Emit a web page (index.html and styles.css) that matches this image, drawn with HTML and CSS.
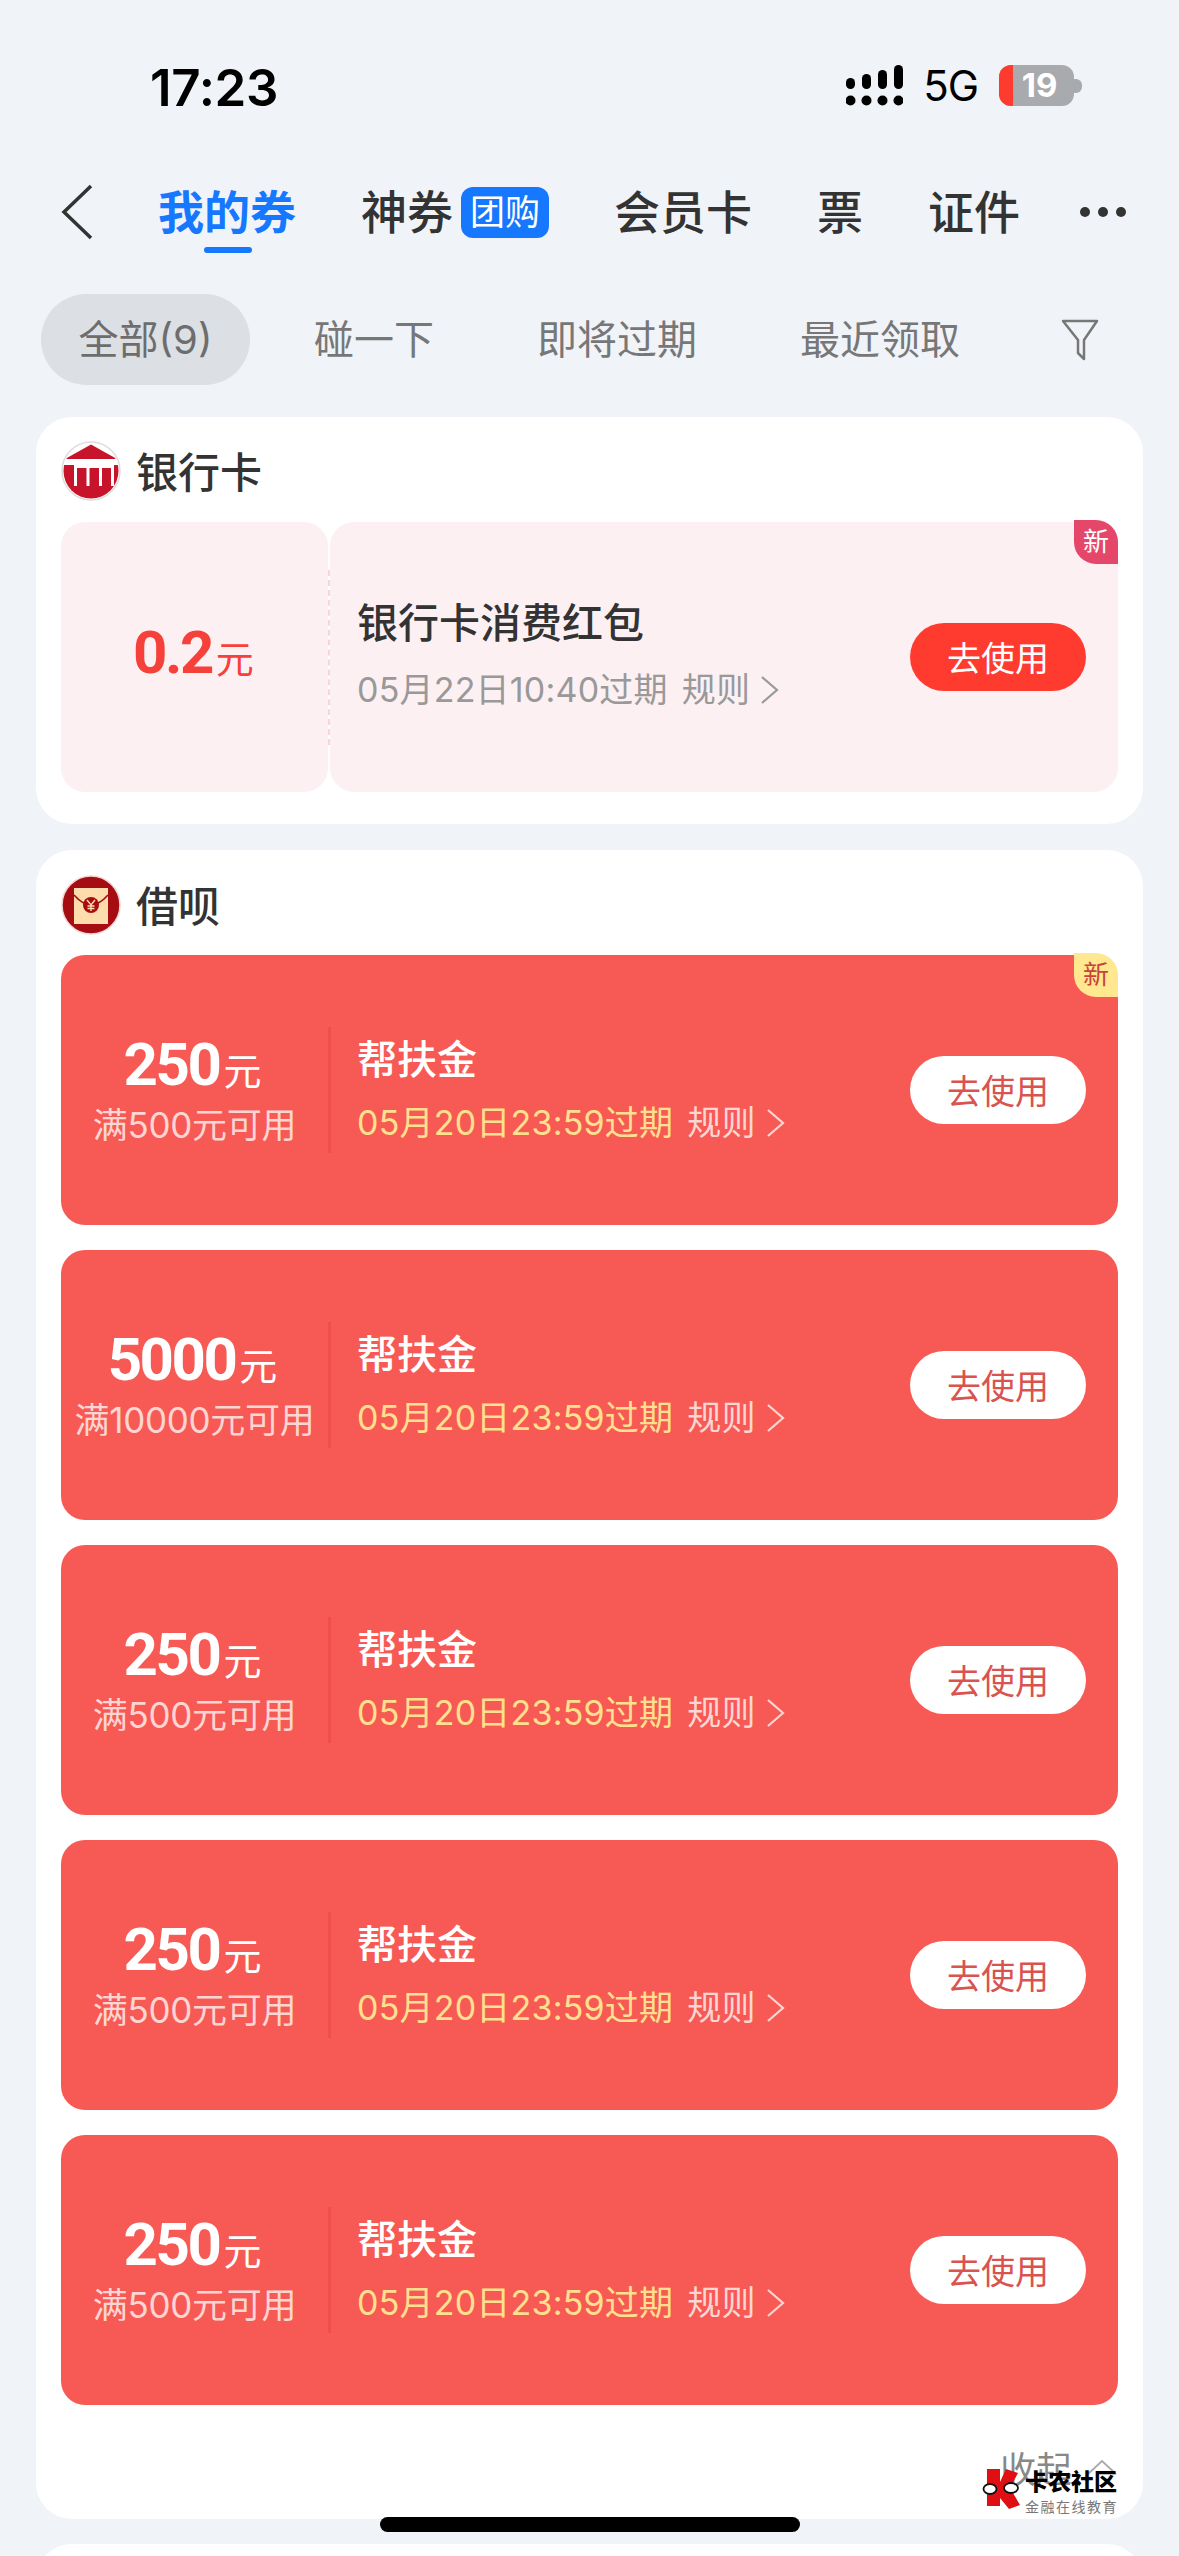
FILE: index.html
```html
<!DOCTYPE html>
<html lang="zh-CN">
<head>
  <meta charset="UTF-8" />
  <meta name="viewport" content="width=device-width, initial-scale=1.0" />
  <title>我的券</title>
  <link rel="stylesheet" href="styles.css">
</head>

<body>
<main class="page">
  <!-- Status bar -->
  <header class="status-bar">
    <span class="time">17:23</span>
    <div class="status-right">
      <svg class="signal" width="57" height="41" viewBox="0 0 57 41">
        <rect x="0" y="13" width="9" height="11" rx="4.5"/>
        <rect x="16" y="9" width="9" height="15" rx="4.5"/>
        <rect x="32" y="5" width="9" height="19" rx="4.5"/>
        <rect x="48" y="0" width="9" height="24" rx="4.5"/>
        <circle cx="4.5" cy="35.5" r="5"/>
        <circle cx="20.5" cy="35.5" r="5"/>
        <circle cx="36.5" cy="35.5" r="5"/>
        <circle cx="52.5" cy="35.5" r="5"/>
      </svg>
      <span class="network">5G</span>
      <div class="battery">
        <div class="battery-low"></div>
        <span class="battery-num">19</span>
      </div>
      <div class="battery-nub"></div>
    </div>
  </header>

  <!-- Top tabs -->
  <nav class="tabs">
    <svg class="back" width="32" height="56" viewBox="0 0 32 56">
      <path d="M30 2 L3 28 L30 54" fill="none" stroke="#333" stroke-width="3.5"/>
    </svg>
    <a class="tab tab-active">我的券</a>
    <a class="tab">神券<span class="tab-badge">团购</span></a>
    <a class="tab">会员卡</a>
    <a class="tab">票</a>
    <a class="tab">证件</a>
    <div class="more"><i></i><i></i><i></i></div>
  </nav>

  <!-- Filter row -->
  <div class="filters">
    <a class="filter filter-active">全部(9)</a>
    <a class="filter">碰一下</a>
    <a class="filter">即将过期</a>
    <a class="filter">最近领取</a>
    <svg class="filter-icon" width="38" height="42" viewBox="0 0 38 42">
      <path d="M2 2 H36 L23 21 V40 L17 34 V21 Z" fill="none" stroke="#777" stroke-width="2.5" stroke-linejoin="round"/>
    </svg>
  </div>

  <!-- Bank card section -->
  <section class="group">
    <div class="group-head">
      <svg class="group-icon" width="60" height="60" viewBox="0 0 60 60">
        <defs>
          <clipPath id="bank-clip"><circle cx="30" cy="30" r="27.5"/></clipPath>
        </defs>
        <circle cx="30" cy="30" r="29" fill="#fff" stroke="#ddd" stroke-width="1.5"/>
        <g clip-path="url(#bank-clip)" fill="#c8142a">
          <path d="M30 3.5 L56 18 H4 Z"/>
          <rect x="0" y="24" width="60" height="36"/>
          <rect x="13" y="24" width="3" height="21" fill="#fff"/>
          <rect x="25.5" y="24" width="3" height="21" fill="#fff"/>
          <rect x="38" y="24" width="3" height="21" fill="#fff"/>
          <rect x="50" y="24" width="3" height="21" fill="#fff"/>
          <rect x="13" y="24" width="40" height="3" fill="#fff"/>
        </g>
      </svg>
      <h2>银行卡</h2>
    </div>
    <div class="coupon coupon-pale">
      <div class="stub">
        <div class="amount">0.2<small>元</small></div>
      </div>
      <div class="divider"></div>
      <div class="coupon-body">
        <div class="coupon-text">
          <h3>银行卡消费红包</h3>
          <p class="expire">05月22日10:40过期<span class="rule">规则<svg class="rule-arrow" width="20" height="30" viewBox="0 0 20 30"><path d="M2 2 L17 15 L2 28" fill="none" stroke="#999" stroke-width="2.2"/></svg></span></p>
        </div>
        <button class="use-btn">去使用</button>
      </div>
      <span class="new-tag">新</span>
    </div>
  </section>

  <!-- Jiebei section -->
  <section class="group group-long">
    <div class="group-head">
      <svg class="group-icon" width="60" height="60" viewBox="0 0 60 60">
        <circle cx="30" cy="30" r="29" fill="#a60d12" stroke="#f3d5d5" stroke-width="1.5"/>
        <rect x="13" y="13" width="34" height="36" fill="#ffdcab"/>
        <path d="M13 20 Q22 30 30 30 Q38 30 47 20" fill="none" stroke="#a60d12" stroke-width="1.6"/>
        <circle cx="30" cy="30" r="8" fill="#a60d12"/>
        <path d="M26 25 L30 30 L34 25 M30 30 V36 M26.5 31 H33.5 M26.5 33.5 H33.5" fill="none" stroke="#ffdcab" stroke-width="1.4"/>
      </svg>
      <h2>借呗</h2>
    </div>

    <div class="coupon coupon-red">
      <div class="stub">
        <div class="amount">250<small>元</small></div>
        <div class="limit">满500元可用</div>
      </div>
      <div class="divider"></div>
      <div class="coupon-body">
        <div class="coupon-text">
          <h3>帮扶金</h3>
          <p class="expire">05月20日23:59过期<span class="rule">规则<svg class="rule-arrow" width="20" height="30" viewBox="0 0 20 30"><path d="M2 2 L17 15 L2 28" fill="none" stroke="#fcd6d2" stroke-width="2.2"/></svg></span></p>
        </div>
        <button class="use-btn">去使用</button>
      </div>
      <span class="new-tag">新</span>
    </div>

    <div class="coupon coupon-red">
      <div class="stub">
        <div class="amount">5000<small>元</small></div>
        <div class="limit">满10000元可用</div>
      </div>
      <div class="divider"></div>
      <div class="coupon-body">
        <div class="coupon-text">
          <h3>帮扶金</h3>
          <p class="expire">05月20日23:59过期<span class="rule">规则<svg class="rule-arrow" width="20" height="30" viewBox="0 0 20 30"><path d="M2 2 L17 15 L2 28" fill="none" stroke="#fcd6d2" stroke-width="2.2"/></svg></span></p>
        </div>
        <button class="use-btn">去使用</button>
      </div>
    </div>

    <div class="coupon coupon-red">
      <div class="stub">
        <div class="amount">250<small>元</small></div>
        <div class="limit">满500元可用</div>
      </div>
      <div class="divider"></div>
      <div class="coupon-body">
        <div class="coupon-text">
          <h3>帮扶金</h3>
          <p class="expire">05月20日23:59过期<span class="rule">规则<svg class="rule-arrow" width="20" height="30" viewBox="0 0 20 30"><path d="M2 2 L17 15 L2 28" fill="none" stroke="#fcd6d2" stroke-width="2.2"/></svg></span></p>
        </div>
        <button class="use-btn">去使用</button>
      </div>
    </div>

    <div class="coupon coupon-red">
      <div class="stub">
        <div class="amount">250<small>元</small></div>
        <div class="limit">满500元可用</div>
      </div>
      <div class="divider"></div>
      <div class="coupon-body">
        <div class="coupon-text">
          <h3>帮扶金</h3>
          <p class="expire">05月20日23:59过期<span class="rule">规则<svg class="rule-arrow" width="20" height="30" viewBox="0 0 20 30"><path d="M2 2 L17 15 L2 28" fill="none" stroke="#fcd6d2" stroke-width="2.2"/></svg></span></p>
        </div>
        <button class="use-btn">去使用</button>
      </div>
    </div>

    <div class="coupon coupon-red">
      <div class="stub">
        <div class="amount">250<small>元</small></div>
        <div class="limit">满500元可用</div>
      </div>
      <div class="divider"></div>
      <div class="coupon-body">
        <div class="coupon-text">
          <h3>帮扶金</h3>
          <p class="expire">05月20日23:59过期<span class="rule">规则<svg class="rule-arrow" width="20" height="30" viewBox="0 0 20 30"><path d="M2 2 L17 15 L2 28" fill="none" stroke="#fcd6d2" stroke-width="2.2"/></svg></span></p>
        </div>
        <button class="use-btn">去使用</button>
      </div>
    </div>

    <div class="collapse">
      <span>收起</span>
      <svg width="30" height="16" viewBox="0 0 30 16"><path d="M1 15 L15 2 L29 15" fill="none" stroke="#aaa" stroke-width="1.8"/></svg>
    </div>
  </section>

  <section class="group group-next"></section>

  <!-- Watermark on top of the screenshot -->
  <div class="watermark">
    <svg width="40" height="42" viewBox="0 0 40 42">
      <path d="M5 1 H18 V14 L24 1 L36 5 L28 20 L38 37 L27 41 L18 30 V38 H5 Z" fill="#e00f14"/>
      <ellipse cx="8" cy="21" rx="6.5" ry="5" fill="#fff" stroke="#111" stroke-width="1.8"/>
      <ellipse cx="29" cy="20" rx="7" ry="5" fill="#fff" stroke="#111" stroke-width="1.8"/>
    </svg>
    <div class="watermark-text">
      <strong>卡农社区</strong>
      <span>金融在线教育</span>
    </div>
  </div>

  <div class="home-bar"></div>
</main>
</body>
</html>
```

FILE: styles.css
```css
* {
  box-sizing: border-box;
}

html,
body {
  margin: 0;
  padding: 0;
}

body {
  background-color: #f0f3f8;
  color: #333333;
  font-family: Inter, "Noto Sans CJK SC", sans-serif;
}

.page {
  position: relative;
  width: 1179px;
  height: 2556px;
  overflow: hidden;
}

/* status bar */
.status-bar {
  height: 150px;
  padding: 21px 97px 0 150px;
  display: flex;
  align-items: center;
  justify-content: space-between;
}

.time {
  margin-top: 4px;
  font-size: 51px;
  font-weight: 600;
  color: #000000;
  letter-spacing: -0.3px;
}

.status-right {
  display: flex;
  align-items: center;
}

.signal {
  fill: #000000;
}

.network {
  margin-left: 20px;
  font-size: 42px;
  letter-spacing: -1px;
  color: #000000;
}

.battery {
  position: relative;
  margin-left: 21px;
  width: 75px;
  height: 41px;
  border-radius: 12px;
  background-color: #a9aaae;
  overflow: hidden;
}

.battery-low {
  width: 14px;
  height: 100%;
  background-color: #ff3b30;
}

.battery-num {
  position: absolute;
  top: 0;
  left: 18px;
  right: 0;
  line-height: 41px;
  text-align: center;
  font-size: 33px;
  font-weight: 700;
  color: #ffffff;
  padding-right: 12px;
}

.battery-nub {
  width: 8px;
  height: 14px;
  border-radius: 0 6px 6px 0;
  background-color: #a9aaae;
}

/* tabs */
.tabs {
  height: 124px;
  padding-left: 61px;
  display: flex;
  align-items: center;
  gap: 65px;
}

.tab {
  position: relative;
  display: flex;
  align-items: center;
  font-size: 46px;
  font-weight: 500;
  line-height: 60px;
  color: #333333;
  white-space: nowrap;
}

.tab-active {
  color: #1677ff;
  font-weight: 700;
}

.tab-active::after {
  content: "";
  position: absolute;
  left: 46px;
  bottom: -11px;
  width: 48px;
  height: 6px;
  border-radius: 3px;
  background-color: #1677ff;
}

.tab-badge {
  margin-left: 8px;
  width: 88px;
  height: 51px;
  border-radius: 12px;
  background-color: #1677ff;
  color: #ffffff;
  font-size: 35px;
  font-weight: 400;
  line-height: 51px;
  text-align: center;
}

.more {
  margin-left: -5px;
  display: flex;
  gap: 8px;
}

.more i {
  width: 10px;
  height: 10px;
  border-radius: 50%;
  background-color: #333333;
}

/* filter row */
.filters {
  height: 91px;
  margin-top: 20px;
  padding: 0 80px 0 41px;
  display: flex;
  align-items: center;
  gap: 25px;
}

.filter {
  padding: 0 39px;
  height: 91px;
  line-height: 91px;
  font-size: 40px;
  color: #777777;
  white-space: nowrap;
}

.filter-active {
  width: 209px;
  padding: 0;
  text-align: center;
  border-radius: 46px;
  background-color: #dcdfe4;
  color: #6d6d6d;
}

.filter-icon {
  margin-left: auto;
  flex-shrink: 0;
}

/* groups */
.group {
  margin: 32px 36px 0;
  padding: 24px 25px 0;
  height: 407px;
  border-radius: 36px;
  background-color: #ffffff;
}

.group-long {
  margin-top: 26px;
  height: 1669px;
  padding-top: 25px;
}

.group-next {
  margin-top: 25px;
  height: 200px;
  padding: 0;
}

.group-head {
  height: 60px;
  display: flex;
  align-items: center;
  gap: 15px;
}

.group-head h2 {
  margin: -3px 0 0;
  font-size: 42px;
  font-weight: 500;
  color: #333333;
}

.group-icon {
  flex-shrink: 0;
}

/* coupons */
.coupon {
  position: relative;
  margin-top: 21px;
  height: 270px;
  display: flex;
  align-items: center;
  border-radius: 24px;
}

.coupon + .coupon {
  margin-top: 25px;
}

.group-long .group-head + .coupon {
  margin-top: 20px;
}

.coupon-red {
  background-color: #f75a54;
}

.stub {
  width: 267px;
  height: 100%;
  padding-right: 4px;
  flex-shrink: 0;
  display: flex;
  flex-direction: column;
  align-items: center;
  justify-content: center;
  border-radius: 24px 0 0 24px;
}

.divider {
  width: 3px;
  flex-shrink: 0;
}

.coupon-body {
  flex: 1;
  height: 100%;
  padding: 0 32px 0 26px;
  display: flex;
  align-items: center;
  justify-content: space-between;
  border-radius: 0 24px 24px 0;
}

.amount {
  font-family: Roboto, "Noto Sans CJK SC", sans-serif;
  font-size: 60px;
  font-weight: 700;
  line-height: 66px;
  letter-spacing: -2.5px;
  white-space: nowrap;
}

.amount small {
  margin-left: 4px;
  font-family: "Noto Sans CJK SC", sans-serif;
  font-size: 38px;
  font-weight: 400;
  letter-spacing: 0;
}

.limit {
  margin-left: 4px;
  font-size: 35px;
  line-height: 46px;
  white-space: nowrap;
  letter-spacing: -0.3px;
}

.coupon-text {
  padding-bottom: 3px;
}

.coupon-text h3 {
  margin: 0;
  font-size: 40px;
  font-weight: 500;
  line-height: 56px;
}

.expire {
  margin: 12px 0 0;
  display: flex;
  align-items: center;
  font-size: 34px;
  letter-spacing: 0.2px;
  line-height: 46px;
  white-space: nowrap;
}

.rule {
  margin-left: 14px;
  display: flex;
  align-items: center;
}

.rule-arrow {
  margin-left: 10px;
}

.use-btn {
  width: 176px;
  height: 68px;
  padding: 0;
  border: none;
  border-radius: 34px;
  font-family: "Noto Sans CJK SC", sans-serif;
  font-size: 34px;
  line-height: 68px;
}

.new-tag {
  position: absolute;
  top: -2px;
  right: 0;
  width: 44px;
  height: 44px;
  border-radius: 0 22px 0 22px;
  font-size: 26px;
  line-height: 44px;
  text-align: center;
}

/* pale bank coupon */
.coupon-pale .stub,
.coupon-pale .coupon-body {
  background-color: #fdf0f3;
}

.coupon-pale .stub {
  border-radius: 24px;
  padding: 0 2px 5px 0;
}

.coupon-pale .coupon-body {
  border-radius: 24px;
  padding-left: 27px;
}

.coupon-pale .coupon-text {
  padding-bottom: 7px;
}

.coupon-pale .expire {
  margin-top: 16px;
  color: #999999;
}

.coupon-pale .divider {
  width: 0;
  height: 175px;
  border-left: 2px dashed #f7d5dc;
}

.coupon-pale .amount {
  color: #f5413a;
}

.coupon-pale h3 {
  color: #333333;
}

.coupon-pale .coupon-text h3 {
  font-size: 41px;
}

.coupon-pale .use-btn {
  background-color: #ff3b30;
  color: #ffffff;
}

.coupon-pale .new-tag {
  background-color: #e5476a;
  color: #ffffff;
}

/* red coupon */
.coupon-red .divider {
  height: 126px;
  background-color: #ee4f48;
}

.coupon-red .amount,
.coupon-red h3 {
  color: #ffffff;
}

.coupon-red .limit {
  color: #fdd5d2;
}

.coupon-red .expire {
  color: #ffe08f;
}

.coupon-red .rule {
  color: #fcd6d2;
}

.coupon-red .use-btn {
  background-color: #ffffff;
  color: #d9534f;
}

.coupon-red .new-tag {
  background-color: #ffe88f;
  color: #c8443c;
}

/* collapse link */
.collapse {
  margin-top: 36px;
  padding-right: 1px;
  display: flex;
  align-items: center;
  justify-content: flex-end;
  gap: 15px;
  font-size: 36px;
  color: #888888;
}

/* overlays */
.watermark {
  position: absolute;
  left: 982px;
  top: 2468px;
  display: flex;
  align-items: flex-start;
  gap: 3px;
}

.watermark-text {
  display: flex;
  flex-direction: column;
  line-height: 1;
  padding-top: 3px;
}

.watermark-text strong {
  font-size: 23px;
  font-weight: 900;
  color: #000000;
}

.watermark-text span {
  margin-top: 6px;
  font-size: 14px;
  letter-spacing: 1.5px;
  color: #777777;
}

.home-bar {
  position: absolute;
  left: 380px;
  top: 2517px;
  width: 420px;
  height: 15px;
  border-radius: 8px;
  background-color: #000000;
}
```
